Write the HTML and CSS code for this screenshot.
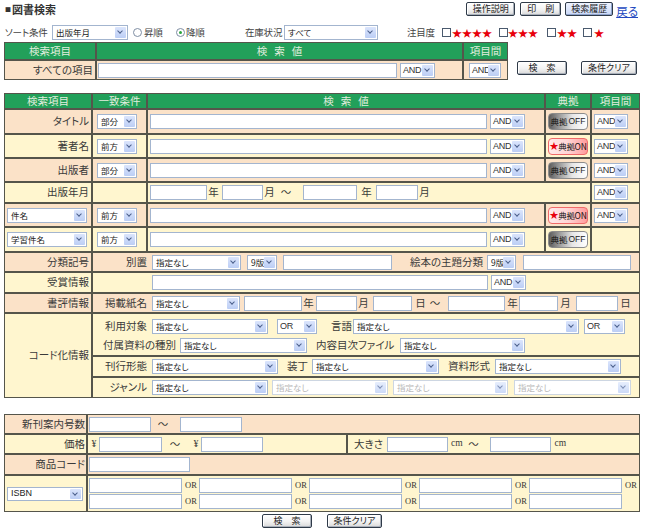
FILE: index.html
```html
<!DOCTYPE html>
<html lang="ja">
<head>
<meta charset="utf-8">
<title>図書検索</title>
<link rel="stylesheet" href="styles.css">
</head>
<body>
<div class="page">

  <div class="topbar">
    <h1 class="title"><span class="sq">■</span>図書検索</h1>
    <div class="tools">
      <span class="btn w49">操作説明</span>
      <span class="btn w41 ml5">印　刷</span>
      <span class="btn btn-on w48 ml4">検索履歴</span>
      <a class="back ml3" href="#">戻る</a>
    </div>
  </div>

  <div class="sortbar">
    <span class="t w42 ml1">ソート条件</span>
    <span class="sel w76 ml5">出版年月</span>
    <span class="radio ml5"></span><span class="t w20 ml2">昇順</span>
    <span class="radio on ml12"></span><span class="t w20 ml1">降順</span>
    <span class="t w37 ml39">在庫状況</span>
    <span class="sel w94 ml2">すべて</span>
    <span class="t w27 ml29">注目度</span>
    <span class="cb ml8"></span><span class="stars w40 ml1">★★★★</span>
    <span class="cb ml7"></span><span class="stars w30">★★★</span>
    <span class="cb ml9"></span><span class="stars w20 ml1">★★</span>
    <span class="cb ml6"></span><span class="stars w10 ml2">★</span>
  </div>

  <div class="quick">
    <table class="grid t1">
      <colgroup><col class="w92"><col class="w367"><col class="w45"></colgroup>
      <tr class="hd r18"><th>検索項目</th><th class="spaced">検索値</th><th>項目間</th></tr>
      <tr class="pe r20">
        <td class="lab">すべての項目</td>
        <td><div class="fl pl1"><input class="inp w299" type="text"><span class="sel and w35 ml3">AND</span></div></td>
        <td><div class="fl pl5"><span class="sel and w32">AND</span></div></td>
      </tr>
    </table>
    <div class="qbtns">
      <span class="btn w50">検　索</span>
      <span class="btn w56 ml14">条件クリア</span>
    </div>
  </div>

  <table class="grid main">
    <colgroup><col class="w88"><col class="w55"><col class="w398"><col class="w46"><col class="w49"></colgroup>
    <tr class="hd r16"><th>検索項目</th><th>一致条件</th><th class="spaced">検索値</th><th>典拠</th><th>項目間</th></tr>

    <tr class="pe r25">
      <td class="lab">タイトル</td>
      <td><div class="fl pl4"><span class="sel w40">部分</span></div></td>
      <td><div class="fl pl2"><input class="inp w337" type="text"><span class="sel and w35 ml3">AND</span></div></td>
      <td><div class="fl pl2"><span class="tk off">典拠<b>OFF</b></span></div></td>
      <td><div class="fl pl2"><span class="sel and w34">AND</span></div></td>
    </tr>
    <tr class="cr r24">
      <td class="lab">著者名</td>
      <td><div class="fl pl4"><span class="sel w40">前方</span></div></td>
      <td><div class="fl pl2"><input class="inp w337" type="text"><span class="sel and w35 ml3">AND</span></div></td>
      <td><div class="fl pl2"><span class="tk on"><em>★</em>典拠ON</span></div></td>
      <td><div class="fl pl2"><span class="sel and w34">AND</span></div></td>
    </tr>
    <tr class="pe r24">
      <td class="lab">出版者</td>
      <td><div class="fl pl4"><span class="sel w40">部分</span></div></td>
      <td><div class="fl pl2"><input class="inp w337" type="text"><span class="sel and w35 ml3">AND</span></div></td>
      <td><div class="fl pl2"><span class="tk off">典拠<b>OFF</b></span></div></td>
      <td><div class="fl pl2"><span class="sel and w34">AND</span></div></td>
    </tr>
    <tr class="cr r21">
      <td class="lab">出版年月</td>
      <td></td>
      <td colspan="2"><div class="fl pl2">
        <input class="inp w57" type="text"><span class="u ml1">年</span>
        <input class="inp w41 ml3" type="text"><span class="u ml1">月</span>
        <span class="tl ml5">～</span>
        <input class="inp w54 ml11" type="text"><span class="u ml4">年</span>
        <input class="inp w42 ml4" type="text"><span class="u ml1">月</span>
      </div></td>
      <td><div class="fl pl2"><span class="sel and w34">AND</span></div></td>
    </tr>
    <tr class="pe r24">
      <td><div class="fl pl2"><span class="sel w80">件名</span></div></td>
      <td><div class="fl pl4"><span class="sel w40">前方</span></div></td>
      <td><div class="fl pl2"><input class="inp w337" type="text"><span class="sel and w35 ml3">AND</span></div></td>
      <td><div class="fl pl2"><span class="tk on"><em>★</em>典拠ON</span></div></td>
      <td><div class="fl pl2"><span class="sel and w34">AND</span></div></td>
    </tr>
    <tr class="cr r25">
      <td><div class="fl pl2"><span class="sel w80">学習件名</span></div></td>
      <td><div class="fl pl4"><span class="sel w40">前方</span></div></td>
      <td><div class="fl pl2"><input class="inp w337" type="text"><span class="sel and w35 ml3">AND</span></div></td>
      <td><div class="fl pl2"><span class="tk off">典拠<b>OFF</b></span></div></td>
      <td></td>
    </tr>
    <tr class="pe r20">
      <td class="lab">分類記号</td>
      <td colspan="4"><div class="fl">
        <span class="lb">別置</span>
        <span class="sel w89">指定なし</span>
        <span class="sel w30 ml6">9版</span>
        <input class="inp w109 ml6" type="text">
        <span class="t w73 ml18">絵本の主題分類</span>
        <span class="sel w29 ml4">9版</span>
        <input class="inp w108 ml7" type="text">
      </div></td>
    </tr>
    <tr class="cr r21">
      <td class="lab">受賞情報</td>
      <td colspan="4"><div class="fl">
        <span class="lb"></span>
        <input class="inp w336" type="text"><span class="sel and w35 ml3">AND</span>
      </div></td>
    </tr>
    <tr class="pe r20">
      <td class="lab">書評情報</td>
      <td colspan="4"><div class="fl">
        <span class="lb">掲載紙名</span>
        <span class="sel w88">指定なし</span>
        <input class="inp w58 ml4" type="text"><span class="u ml1">年</span>
        <input class="inp w41 ml2" type="text"><span class="u ml1">月</span>
        <input class="inp w39 ml4" type="text"><span class="u ml3">日</span>
        <span class="tl ml3">～</span>
        <input class="inp w57 ml7" type="text"><span class="u ml2">年</span>
        <input class="inp w39 ml1" type="text"><span class="u ml2">月</span>
        <input class="inp w42 ml5" type="text"><span class="u ml2">日</span>
      </div></td>
    </tr>
    <tr class="cr r85">
      <td class="lab">コード化情報</td>
      <td colspan="4" class="code">
        <div class="blk b1">
          <div class="ln">
            <span class="lb">利用対象</span>
            <span class="sel w116">指定なし</span>
            <span class="sel and w40 ml9">OR</span>
            <span class="t w21 ml14">言語</span>
            <span class="sel w226 ml1">指定なし</span>
            <span class="sel and w41 ml5">OR</span>
          </div>
          <div class="ln">
            <span class="t w74 ml10">付属資料の種別</span>
            <span class="sel w127 ml3">指定なし</span>
            <span class="t w79 ml9">内容目次ファイル</span>
            <span class="sel w125 ml5">指定なし</span>
          </div>
        </div>
        <div class="blk b2">
          <div class="ln">
            <span class="lb">刊行形態</span>
            <span class="sel w126">指定なし</span>
            <span class="t w20 ml9">装丁</span>
            <span class="sel w127 ml5">指定なし</span>
            <span class="t w44 ml9">資料形式</span>
            <span class="sel w126 ml3">指定なし</span>
          </div>
        </div>
        <div class="blk b3">
          <div class="ln">
            <span class="lb">ジャンル</span>
            <span class="sel w116">指定なし</span>
            <span class="sel dis w116 ml4">指定なし</span>
            <span class="sel dis w115 ml5">指定なし</span>
            <span class="sel dis w117 ml6">指定なし</span>
          </div>
        </div>
      </td>
    </tr>
  </table>

  <table class="grid bottom">
    <colgroup><col class="w83"><col class="w260"><col class="w293"></colgroup>
    <tr class="pe r20">
      <td class="lab lab2">新刊案内号数</td>
      <td colspan="2"><div class="fl pl1">
        <input class="inp w62" type="text"><span class="tl ml6">～</span><input class="inp w62 ml11" type="text">
      </div></td>
    </tr>
    <tr class="cr r20">
      <td class="lab lab2">価格</td>
      <td><div class="fl">
        <span class="yen ml2">¥</span><input class="inp w63 ml1" type="text">
        <span class="tl ml7">～</span>
        <span class="yen ml11">¥</span><input class="inp w62 ml1" type="text">
      </div></td>
      <td><div class="fl">
        <span class="t w29 ml6">大きさ</span><input class="inp w61 ml4" type="text"><span class="cm ml3">cm</span>
        <span class="tl ml5">～</span>
        <input class="inp w61 ml10" type="text"><span class="cm ml4">cm</span>
      </div></td>
    </tr>
    <tr class="pe r21">
      <td class="lab lab2">商品コード</td>
      <td colspan="2"><div class="fl pl1"><input class="inp w101" type="text"></div></td>
    </tr>
    <tr class="cr r37">
      <td><div class="fl pl2"><span class="sel isbnsel w76">ISBN</span></div></td>
      <td colspan="2"><div class="isbn">
        <input class="inp" type="text"><span class="or">OR</span>
        <input class="inp" type="text"><span class="or">OR</span>
        <input class="inp" type="text"><span class="or">OR</span>
        <input class="inp" type="text"><span class="or">OR</span>
        <input class="inp" type="text"><span class="or">OR</span>
        <input class="inp" type="text"><span class="or">OR</span>
        <input class="inp" type="text"><span class="or">OR</span>
        <input class="inp" type="text"><span class="or">OR</span>
        <input class="inp" type="text"><span class="or">OR</span>
        <input class="inp" type="text"><span class="or"></span>
      </div></td>
    </tr>
  </table>

  <div class="foot">
    <span class="btn w50">検　索</span>
    <span class="btn w55">条件クリア</span>
  </div>

</div>
</body>
</html>
```

FILE: styles.css
```css
* { box-sizing: border-box; }
html, body { margin: 0; padding: 0; background: #fff; }
body {
  font-family: "Noto Sans CJK JP", "Noto Sans", sans-serif;
  font-size: 10.5px;
  color: #3a3a3a;
  font-feature-settings: "palt";
  line-height: 1.2;
}
.page { width: 650px; padding: 2px 0 0 4px; }

/* ---------- top bar ---------- */
.topbar { display: flex; align-items: center; width: 634px; height: 14px; }
.title { margin: 0 0 0 1px; font-size: 11px; font-weight: bold; color: #333; line-height: 14px; }
.title .sq { font-size: 6px; vertical-align: 2px; margin-right: 1px; }
.tools { display: flex; align-items: center; margin-left: auto; }
.back { color: #2448c0; font-size: 11.5px; text-decoration: underline; line-height: 14px; margin-top: 3px; }

.btn {
  display: inline-flex; align-items: center; justify-content: center; flex: none;
  height: 14px; border: 1px solid #2f3a48; border-radius: 2px;
  background: linear-gradient(#ffffff, #f2f2f2 55%, #d9d9d9);
  box-shadow: inset -1px -1px 0 #a9b0ba, inset 1px 1px 0 #fff;
  font-size: 9px; color: #222; white-space: nowrap;
}
.btn-on { background: linear-gradient(#eef3ff, #c9d7f6); box-shadow: inset -1px -1px 0 #8ea3cc; }

/* ---------- sort bar ---------- */
.sortbar { display: flex; align-items: center; height: 15px; margin-top: 9px; }
.sortbar .t { font-size: 9.5px; letter-spacing: -0.2px; color: #444; }
.t { display: inline-block; flex: none; white-space: nowrap; }
.radio {
  flex: none; width: 9px; height: 9px; border-radius: 50%;
  border: 1px solid #7f8ea3; background: #fff; position: relative;
}
.radio.on::after {
  content: ""; position: absolute; left: 2px; top: 2px; width: 3px; height: 3px;
  border-radius: 50%; background: #2aa43c;
}
.cb { flex: none; width: 9px; height: 9px; border: 1px solid #4a5a6e; background: #fff; }
.stars { flex: none; display: inline-block; color: #e8000b; font-size: 10px; white-space: nowrap; line-height: 12px; }

/* ---------- form controls ---------- */
.sel {
  position: relative; display: inline-flex; align-items: center; flex: none;
  height: 15px; border: 1px solid #a3b5cf; background: #fff;
  font-size: 8.5px; color: #222; padding: 0 13px 0 3px;
  white-space: nowrap; overflow: hidden;
}
.sel::before {
  content: ""; position: absolute; top: 1px; right: 1px; bottom: 1px; width: 11px;
  background: linear-gradient(#dbe5fc, #bccef5); border-radius: 1px;
}
.sel::after {
  content: ""; position: absolute; top: 3px; right: 5px; width: 3px; height: 3px;
  border-right: 1.5px solid #4b5f8b; border-bottom: 1.5px solid #4b5f8b;
  transform: rotate(45deg);
}
.sel.and {
  font-family: "Liberation Sans", "Noto Sans", sans-serif; font-size: 9px; color: #333;
  padding: 0 12px 0 2px; letter-spacing: -0.3px;
}
.sel.isbnsel { font-family: "Liberation Sans", sans-serif; font-size: 9px; height: 14px; }
.sel.dis { color: #b9b9b9; border-color: #cdd6e2; }
.sel.dis::before { background: linear-gradient(#e7eefd, #ccdaf7); }
.sel.dis::after { border-color: #7d8fb5; }

.inp {
  flex: none; height: 15px; margin: 0; padding: 0;
  border: 1px solid #a3b5cf; background: #fff; font-size: 10px;
}

.u { display: inline-block; flex: none; width: 11px; text-align: center; }
.tl { display: inline-block; flex: none; width: 12px; text-align: center; }
.yen { display: inline-block; flex: none; width: 8px; text-align: center; font-family: "Liberation Serif", serif; font-size: 10px; }
.cm { display: inline-block; flex: none; font-family: "Liberation Serif", serif; font-size: 9.5px; }

/* ---------- tables ---------- */
.grid { border-collapse: separate; border-spacing: 0; table-layout: fixed; }
.grid th, .grid td { border: 1px solid #55554b; padding: 0; vertical-align: middle; }
.grid th {
  background: #22a05a; color: #e3eedf; font-weight: normal; font-size: 10.5px;
  text-align: center; white-space: nowrap;
}
.spaced { letter-spacing: 7px; text-indent: 7px; }
.pe td { background: #fbe2c8; }
.cr td { background: #fff6cf; }
.lab { text-align: right; padding-right: 2px !important; white-space: nowrap; }
.lab2 { padding-right: 1px !important; }
.fl { display: flex; align-items: center; }

.r16 { height: 16px; } .r18 { height: 18px; } .r20 { height: 20px; } .r21 { height: 21px; }
.r24 { height: 24px; } .r25 { height: 25px; } .r37 { height: 37px; } .r85 { height: 85px; }

.quick { display: flex; align-items: flex-end; margin-top: 2px; }
.t1 { width: 504px; }
.qbtns { display: flex; margin-left: 9px; margin-bottom: 5px; }

.main { width: 636px; margin-top: 13px; }
.bottom { width: 636px; margin-top: 16px; }

.lb { display: inline-block; flex: none; width: 47px; margin: 0 5px 0 7px; text-align: right; white-space: nowrap; }

.code { vertical-align: top !important; }
.blk { border-bottom: 2px solid #55554b; }
.blk.b1 { height: 43px; padding-top: 2px; }
.blk.b2 { height: 21px; }
.blk.b3 { height: 19px; border-bottom: none; }
.ln { display: flex; align-items: center; height: 19px; }
.b1 .ln:first-child { height: 20px; }

/* 典拠 toggle */
.tk {
  display: inline-flex; align-items: center; justify-content: center; flex: none;
  width: 40px; height: 17px; border-radius: 4px; font-size: 8.5px; color: #111; white-space: nowrap;
}
.tk b { font-family: "Liberation Sans", sans-serif; font-weight: normal; font-size: 8.5px; margin-left: 1px; color: #222; }
.tk.off {
  border: 1px solid #8c8c8c;
  background: linear-gradient(to right, #5c5c5c, #9c9c9c 28%, #e6e6e6 62%, #ffffff);
}
.tk.on {
  border: 1px solid #ef6a6a;
  background: linear-gradient(to right, #ffeaea, #ffd5d5 50%, #ff9b9b);
  letter-spacing: -0.3px;
}
.tk em { font-style: normal; color: #e8000b; font-size: 9px; }

/* ISBN block */
.isbn { display: grid; grid-template-columns: repeat(5, 93px 17px); row-gap: 1px; margin-left: 1px; }
.isbn .inp { width: 93px; }
.or { font-family: "Liberation Serif", serif; font-size: 8.5px; padding-left: 3px; align-self: center; color: #333; }

.foot { display: flex; justify-content: center; width: 636px; margin-top: 2px; }
.foot .btn + .btn { margin-left: 15px; }

/* utilities: widths */
.w10{width:10px}.w20{width:20px}.w21{width:21px}.w27{width:27px}.w29{width:29px}.w30{width:30px}
.w32{width:32px}.w34{width:34px}.w35{width:35px}.w37{width:37px}.w39{width:39px}.w40{width:40px}
.w41{width:41px}.w42{width:42px}.w44{width:44px}.w45{width:45px}.w46{width:46px}.w48{width:48px}
.w49{width:49px}.w50{width:50px}.w54{width:54px}.w55{width:55px}.w56{width:56px}.w57{width:57px}
.w58{width:58px}.w61{width:61px}.w62{width:62px}.w63{width:63px}.w73{width:73px}.w74{width:74px}
.w76{width:76px}.w79{width:79px}.w80{width:80px}.w83{width:83px}.w88{width:88px}.w89{width:89px}
.w92{width:92px}.w94{width:94px}.w101{width:101px}.w108{width:108px}.w109{width:109px}
.w115{width:115px}.w116{width:116px}.w117{width:117px}.w125{width:125px}.w126{width:126px}
.w127{width:127px}.w226{width:226px}.w260{width:260px}.w293{width:293px}.w299{width:299px}
.w336{width:336px}.w337{width:337px}.w367{width:367px}.w398{width:398px}

/* utilities: spacing */
.ml1{margin-left:1px}.ml2{margin-left:2px}.ml3{margin-left:3px}.ml4{margin-left:4px}.ml5{margin-left:5px}
.ml6{margin-left:6px}.ml7{margin-left:7px}.ml8{margin-left:8px}.ml9{margin-left:9px}.ml10{margin-left:10px}
.ml11{margin-left:11px}.ml12{margin-left:12px}.ml13{margin-left:13px}.ml14{margin-left:14px}
.ml18{margin-left:18px}.ml29{margin-left:29px}.ml39{margin-left:39px}
.pl1{padding-left:1px}.pl2{padding-left:2px}.pl4{padding-left:4px}.pl5{padding-left:5px}
```
